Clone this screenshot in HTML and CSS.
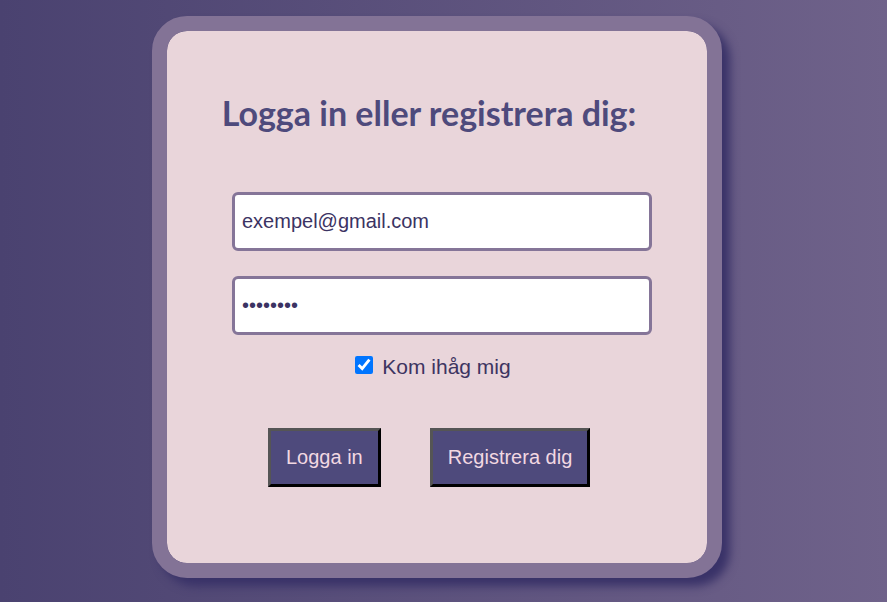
FILE: index.html
```html
<!DOCTYPE html>
<html lang="sv">
<head>
<meta charset="utf-8">
<title>Logga in</title>
<link rel="stylesheet" href="styles.css">
</head>
<body>
<div class="card">
  <h1 class="title">Logga in eller registrera dig:</h1>
  <form class="form">
    <input class="field" type="email" value="exempel@gmail.com">
    <input class="field field-pass" type="password" value="12345678">
    <label class="remember"><input class="check" type="checkbox" checked><span class="remember-text">Kom ihåg mig</span></label>
    <div class="actions">
      <button class="btn" type="button">Logga in</button>
      <button class="btn" type="button">Registrera dig</button>
    </div>
  </form>
</div>
</body>
</html>
```
FILE: styles.css
```css
html, body {
  margin: 0;
  height: 100%;
}
body {
  background: linear-gradient(to right, #4a4270, #6f628a);
  padding: 16px 0 0 152px;
  box-sizing: border-box;
  font-family: "Liberation Sans", Arial, sans-serif;
  overflow: hidden;
}
.card {
  width: 570px;
  height: 562px;
  box-sizing: border-box;
  border: 15px solid #837396;
  border-radius: 35px;
  background: #e9d5da;
  box-shadow: 8px 8px 10px #393268;
  background-clip: padding-box;
}
.title {
  margin: 62px 16px 0 0;
  height: 40px;
  line-height: 40px;
  text-align: center;
  font-family: Lato, "Open Sans", sans-serif;
  font-weight: 700;
  font-size: 34px;
  color: #4e4a7c;
}
.form {
  display: flex;
  flex-direction: column;
}
.field {
  margin: 59px 0 0 65px;
  width: 420px;
  height: 59px;
  box-sizing: border-box;
  border: 3px solid #857598;
  border-radius: 6px;
  background: #fff;
  padding: 0 7px;
  font-family: "Liberation Sans", Arial, sans-serif;
  font-size: 20px;
  color: #3b3363;
  outline: none;
}
.field-pass {
  margin-top: 25px;
}
.remember {
  margin: 21px 8px 0 0;
  display: flex;
  align-items: center;
  justify-content: center;
  gap: 9px;
  height: 18px;
  font-size: 21px;
  color: #3d3461;
}
.remember-text {
  padding-top: 4px;
}
.check {
  margin: 0;
  width: 18px;
  height: 18px;
}
.actions {
  margin: 54px 0 0 101px;
  display: flex;
  gap: 49px;
}
.btn {
  height: 59px;
  padding: 0 15px;
  box-sizing: border-box;
  border: 3px solid;
  border-color: #555 #000 #000 #555;
  background: #4e4a7c;
  color: #f2d8e2;
  font-family: "Liberation Sans", Arial, sans-serif;
  font-size: 20px;
}
```
